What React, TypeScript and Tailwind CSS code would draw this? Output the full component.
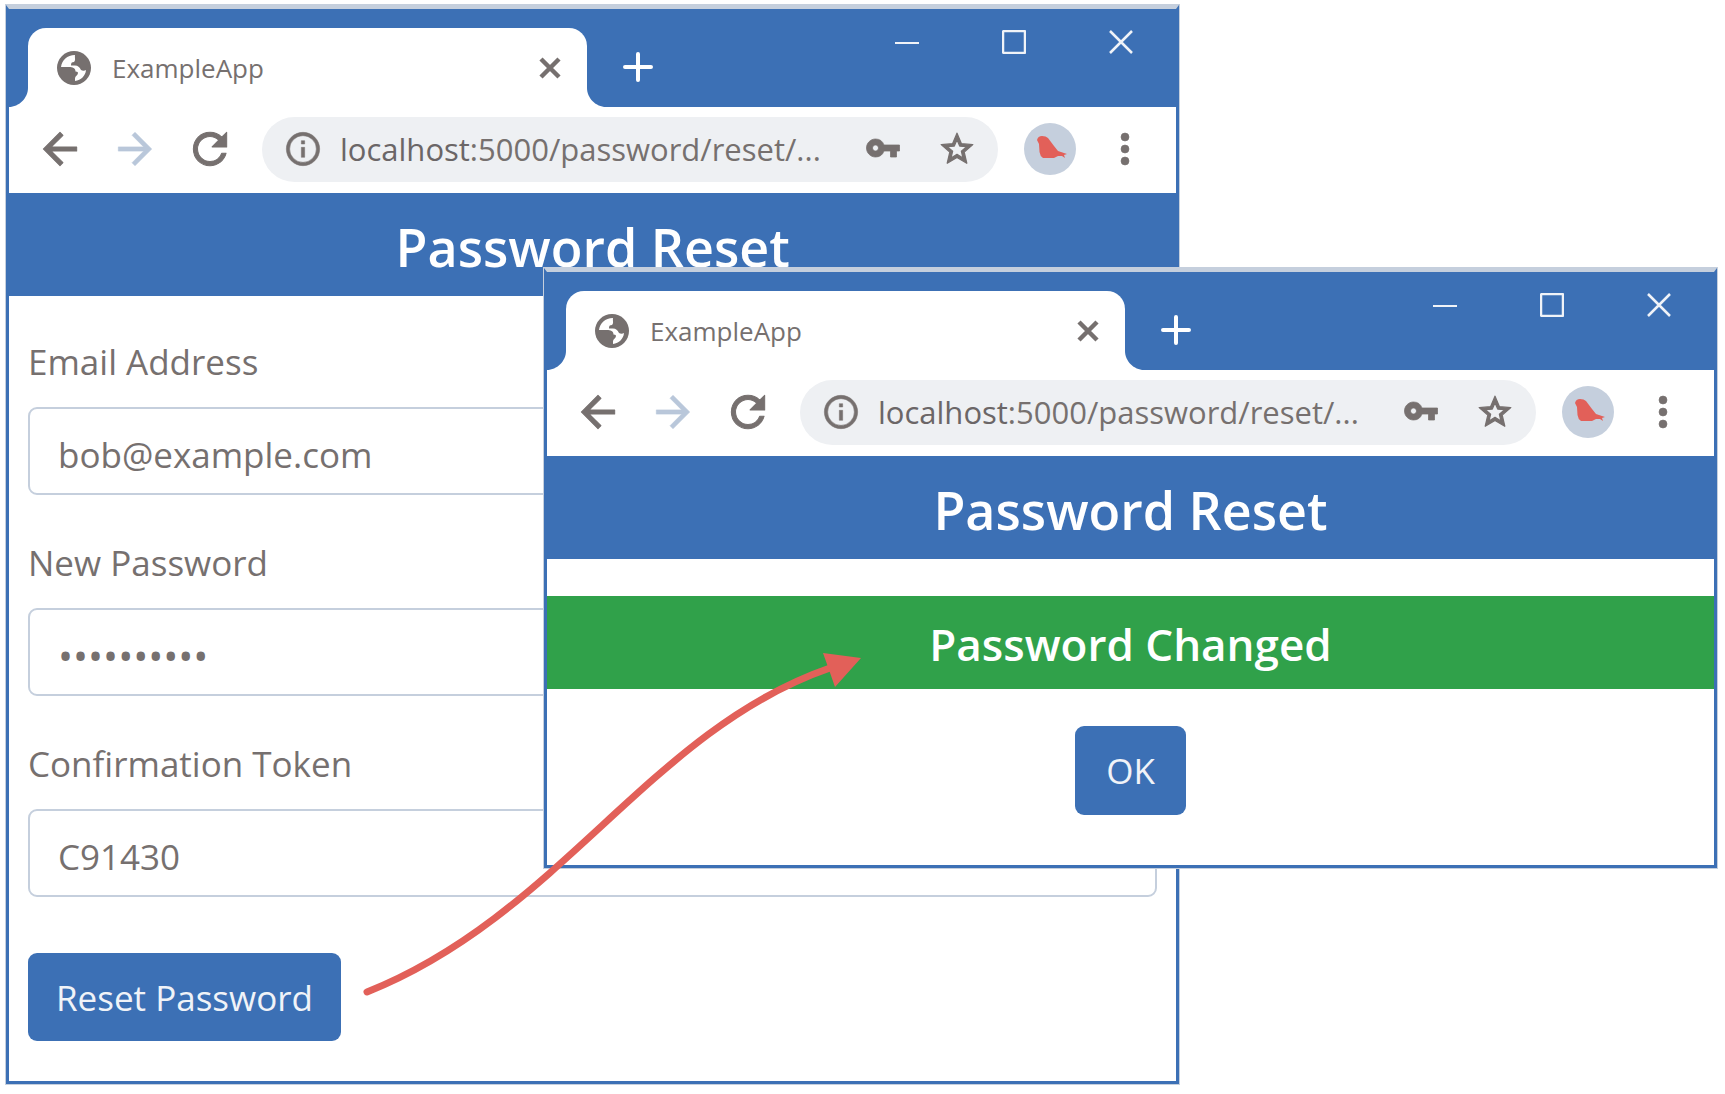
import { useId, type ReactNode } from "react";

const icons = {
  back: "M20 11H7.830l5.590-5.590L12 4l-8 8 8 8 1.410-1.410L7.830 13H20v-2z",
  forward: "M12 4l-1.410 1.410L16.170 11H4v2h12.170l-5.580 5.590L12 20l8-8z",
  reload:
    "M17.650 6.350A7.958 7.958 0 0 0 12 4c-4.420 0-7.990 3.580-7.990 8s3.570 8 7.990 8c3.730 0 6.840-2.550 7.730-6h-2.080A5.990 5.990 0 0 1 12 18c-3.310 0-6-2.690-6-6s2.690-6 6-6c1.660 0 3.140.690 4.220 1.780L13 11h7V4l-2.350 2.350z",
  info: "M11 7h2v2h-2zM11 11h2v6h-2zM12 2a10 10 0 1 0 0 20a10 10 0 1 0 0-20zM12 4a8 8 0 1 1 0 16a8 8 0 1 1 0-16z",
  key: "M12.650 10A5.990 5.990 0 0 0 7 6c-3.310 0-6 2.690-6 6s2.690 6 6 6a5.990 5.990 0 0 0 5.650-4H17v4h4v-4h2v-4H12.650zM7 14c-1.100 0-2-.900-2-2s.900-2 2-2 2 .900 2 2-.900 2-2 2z",
  star: "M22 9.240l-7.190-.620L12 2 9.190 8.630 2 9.240l5.460 4.730L5.820 21 12 17.270 18.180 21l-1.630-7.030L22 9.240zM12 15.400l-3.760 2.270 1-4.280-3.320-2.880 4.380-.380L12 6.100l1.710 4.040 4.380.380-3.320 2.880 1 4.280L12 15.400z",
  menu: "M12 4a2 2 0 1 0 0 4a2 2 0 1 0 0-4zM12 10a2 2 0 1 0 0 4a2 2 0 1 0 0-4zM12 16a2 2 0 1 0 0 4a2 2 0 1 0 0-4z",
};

function Icon({ name, className, weight }: { name: keyof typeof icons; className: string; weight: number }) {
  return (
    <svg viewBox="0 0 24 24" className={className} aria-hidden="true">
      <path d={icons[name]} fill="currentColor" stroke="currentColor" strokeWidth={weight} strokeLinejoin="round" />
    </svg>
  );
}

function Globe() {
  return (
    <svg viewBox="0 0 34 34" className="size-[34px] shrink-0" aria-hidden="true">
      <circle cx="17" cy="17" r="17" fill="#76706f" />
      <path
        d="M18 4C10 4 5 9 4 16h8c3.500 0 6.500 1 6.500 4.500 2.500 0 3 1 2 3-1 1.500-2.500 2-2.500 4V30c6-1 10.500-5 11-11-1.500 1-3.500 1-5 0-1.500-3-3-4.500-6-4.500h-4c0-2.500.500-3.500 3-3.500 2-2 .500-4 1-7z"
        fill="#fff"
      />
    </svg>
  );
}

function Bird() {
  return (
    <svg viewBox="0 0 52 52" className="size-[52px]" aria-hidden="true">
      <circle cx="26" cy="26" r="26" fill="#c5cfdd" />
      <path
        d="M13 17Q14 13 18 13Q22 13 24 15L30 23L34 28L43 31L40 32L41 35L38 33L34 33L30 35L19 35Q16 33 15.500 29L15 21z"
        fill="#e26059"
      />
    </svg>
  );
}

function TitleBar() {
  return (
    <div className="flex h-[98px] items-end justify-between bg-[#3c70b5] pl-[19px]">
      <div className="flex items-end">
        <div className="relative flex h-[79px] w-[559px] items-center rounded-t-[18px] bg-white pr-[26px] pl-[29px]">
          <Globe />
          <span className="ml-[21px] flex-1 text-[26px] leading-9 text-[#76706f]">ExampleApp</span>
          <button type="button" aria-label="Close tab">
            <svg viewBox="0 0 22 22" className="size-[22px]" aria-hidden="true">
              <path d="M2 2l18 18M20 2L2 20" stroke="#76706f" strokeWidth="4.500" />
            </svg>
          </button>
          <svg viewBox="0 0 19 19" className="absolute bottom-0 -left-[19px] size-[19px]" aria-hidden="true">
            <path d="M19 0v19H0C10 19 19 10 19 0z" fill="#fff" />
          </svg>
          <svg viewBox="0 0 19 19" className="absolute -right-[19px] bottom-0 size-[19px]" aria-hidden="true">
            <path d="M0 0v19h19C9 19 0 10 0 0z" fill="#fff" />
          </svg>
        </div>
        <button type="button" aria-label="New tab" className="mb-[25px] ml-[36px]">
          <svg viewBox="0 0 30 30" className="size-[30px]" aria-hidden="true">
            <path d="M15 2v26M2 15h26" stroke="#fff" strokeWidth="4" strokeLinecap="round" />
          </svg>
        </button>
      </div>
      <div className="flex gap-[83px] self-start pt-[21px] pr-[43px]">
        <button type="button" aria-label="Minimize">
          <svg viewBox="0 0 24 24" className="size-6" aria-hidden="true">
            <path d="M0 13h24" stroke="#f0f3f8" strokeWidth="2" />
          </svg>
        </button>
        <button type="button" aria-label="Maximize">
          <svg viewBox="0 0 24 24" className="size-6" aria-hidden="true">
            <rect x="1" y="1" width="22" height="22" rx="1" fill="none" stroke="#f0f3f8" strokeWidth="2.500" />
          </svg>
        </button>
        <button type="button" aria-label="Close">
          <svg viewBox="0 0 24 24" className="size-6" aria-hidden="true">
            <path d="M1 1l22 22M23 1L1 23" stroke="#f0f3f8" strokeWidth="2.500" />
          </svg>
        </button>
      </div>
    </div>
  );
}

function Toolbar() {
  return (
    <div className="flex h-[86px] items-center pr-[27px] pb-[2px] pl-[26px] text-[#76706f]">
      <button type="button" aria-label="Back">
        <Icon name="back" weight={0.5} className="size-[50px]" />
      </button>
      <button type="button" aria-label="Forward" className="ml-[25px] text-[#b9c7da]">
        <Icon name="forward" weight={0.3} className="size-[50px]" />
      </button>
      <button type="button" aria-label="Reload" className="ml-[25px]">
        <Icon name="reload" weight={0.5} className="size-[50px]" />
      </button>
      <div className="ml-[27px] flex h-[65px] min-w-0 flex-1 items-center rounded-full bg-[#eef0f3] pr-[22px] pl-[21px]">
        <Icon name="info" weight={0.3} className="size-[40px] shrink-0" />
        <span className="ml-[17px] flex-1 truncate text-[31px] leading-10">
          <span className="font-medium text-[#6b6667]">localhost</span>:5000/password/reset/...
        </span>
        <button type="button" aria-label="Saved password" className="pb-[2px]">
          <Icon name="key" weight={0.5} className="size-[36px]" />
        </button>
        <button type="button" aria-label="Bookmark" className="ml-[37px]">
          <Icon name="star" weight={0.8} className="size-[38px]" />
        </button>
      </div>
      <button type="button" aria-label="Profile" className="ml-[26px]">
        <Bird />
      </button>
      <button type="button" aria-label="Menu" className="ml-[25px]">
        <Icon name="menu" weight={0.3} className="size-[48px]" />
      </button>
    </div>
  );
}

function BrowserWindow({ className, children }: { className: string; children: ReactNode }) {
  return (
    <section
      className={`border-x-3 border-t-4 border-b-3 border-[#3c70b5] border-t-[#c5cfdd] bg-white outline-1 outline-[#c5cfdd] ${className}`}
    >
      <TitleBar />
      <Toolbar />
      <h1 className="bg-[#3c70b5] pt-[22px] pb-[17px] text-center text-[52px] leading-[64px] font-semibold text-white">
        Password Reset
      </h1>
      {children}
    </section>
  );
}

function Field({ label, type, value }: { label: string; type: string; value: string }) {
  const id = useId();
  return (
    <div className="mb-[44px] flex flex-col">
      <label htmlFor={id} className="mb-[21px] text-[35px] leading-[48px] text-[#76706f]">
        {label}
      </label>
      <input
        id={id}
        type={type}
        defaultValue={value}
        className={`h-[88px] w-full rounded-[9px] border-2 border-[#c5cfdd] bg-white px-[28px] pt-[6px] text-[#76706f] ${
          type === "password" ? "text-[40px]" : "text-[35px]"
        }`}
      />
    </div>
  );
}

export default function App() {
  return (
    <main className="relative min-h-screen overflow-hidden bg-white px-1.5 py-[5px] font-['Open_Sans',sans-serif]">
      <BrowserWindow className="w-[68.500%]">
        <form className="px-[19px] pt-[42px] pb-[40px]" onSubmit={(e) => e.preventDefault()}>
          <Field label="Email Address" type="text" value="bob@example.com" />
          <Field label="New Password" type="password" value="password12" />
          <Field label="Confirmation Token" type="text" value="C91430" />
          <button
            type="submit"
            className="mt-[12px] h-[88px] rounded-[9px] bg-[#3c70b5] px-[28px] pt-[2px] text-[35px] text-[#f0f3f8]"
          >
            Reset Password
          </button>
        </form>
      </BrowserWindow>

      <BrowserWindow className="absolute top-[268px] right-2 w-[68%]">
        <div className="flex flex-col items-center pt-[37px] pb-[50px]">
          <h2 className="w-full bg-[#30a14a] pt-[20px] pb-[17px] text-center text-[44px] leading-[56px] font-semibold text-white">
            Password Changed
          </h2>
          <button
            type="button"
            className="mt-[37px] h-[89px] rounded-[9px] bg-[#3c70b5] px-[31px] pt-[2px] text-[35px] text-[#f0f3f8]"
          >
            OK
          </button>
        </div>
      </BrowserWindow>

      <svg
        viewBox="0 0 510 350"
        className="pointer-events-none absolute top-[650px] left-[360px] w-[510px]"
        aria-hidden="true"
      >
        <path
          d="M7 342C200 265 290 80 470 18"
          fill="none"
          stroke="#e26059"
          strokeWidth="7"
          strokeLinecap="round"
        />
        <path d="M501 8L463 3l5 14 7 20z" fill="#e26059" />
      </svg>
    </main>
  );
}
